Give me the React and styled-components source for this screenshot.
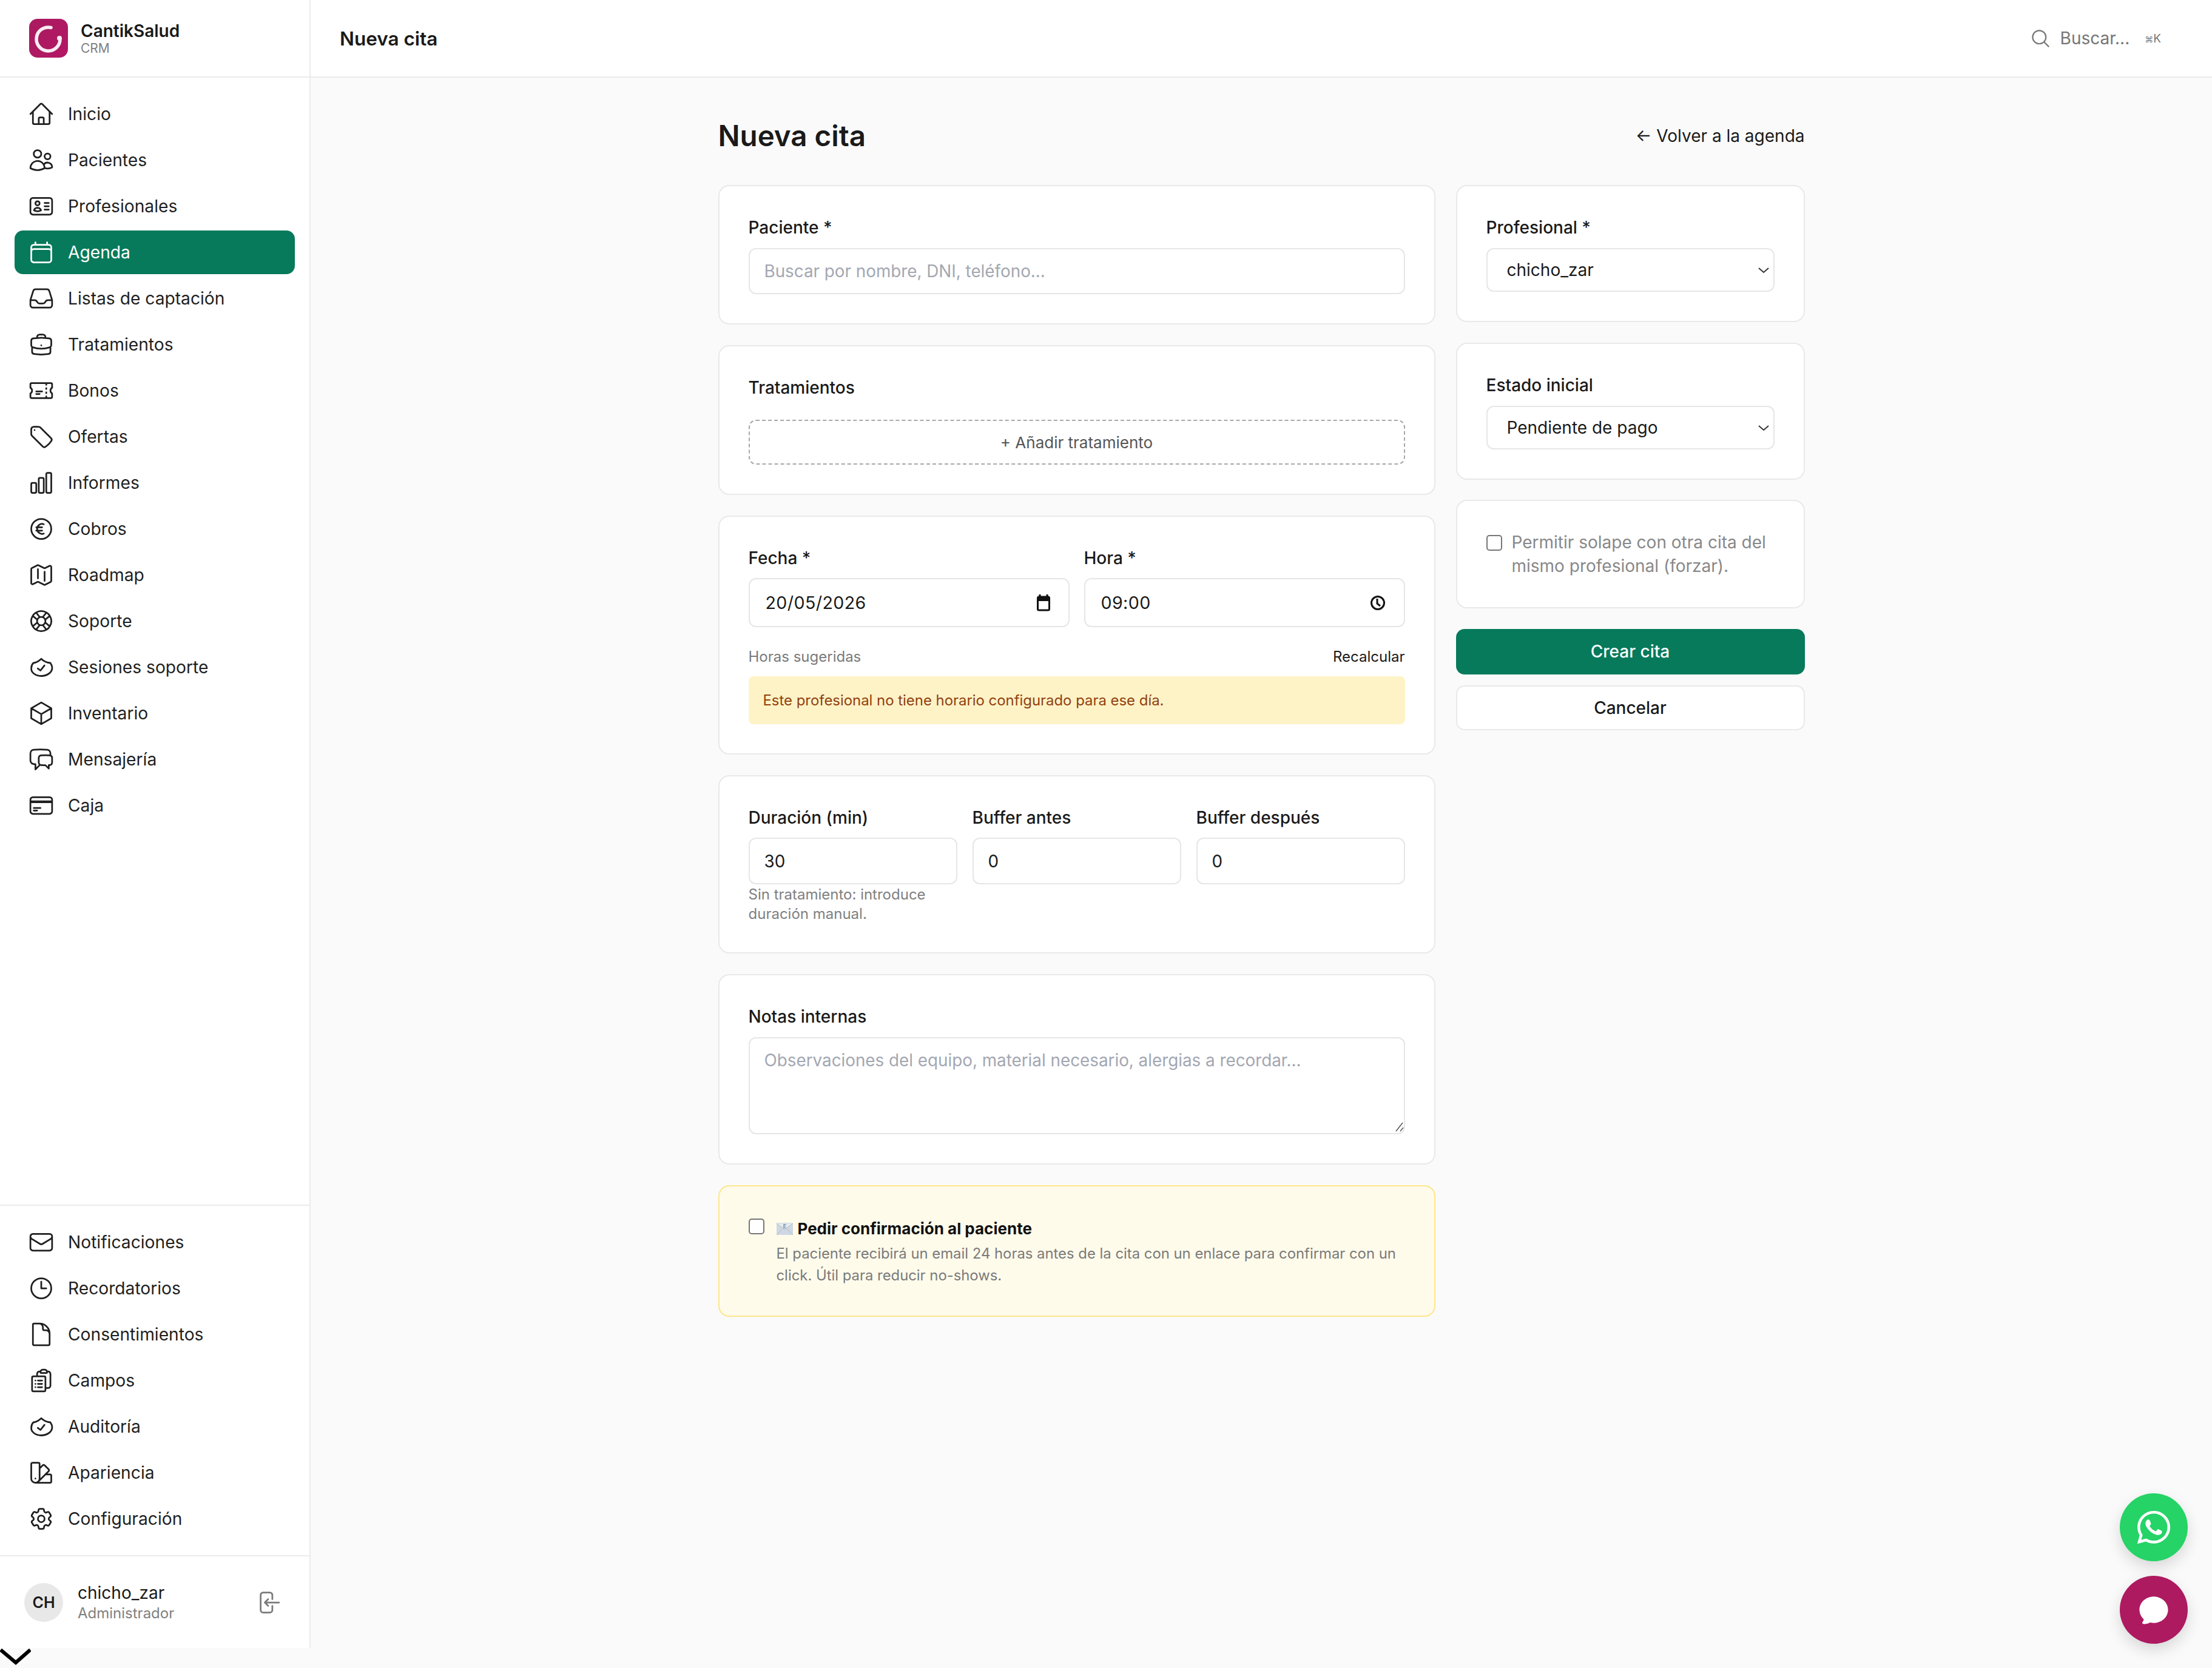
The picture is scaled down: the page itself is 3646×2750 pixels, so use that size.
import React from 'react';
import styled, { createGlobalStyle } from 'styled-components';
import { FaWhatsapp } from 'react-icons/fa';
import {
  HiOutlineHome,
  HiOutlineUsers,
  HiOutlineIdentification,
  HiOutlineCalendar,
  HiOutlineInbox,
  HiOutlineBriefcase,
  HiOutlineTicket,
  HiOutlineTag,
  HiOutlineChartBar,
  HiOutlineCurrencyEuro,
  HiOutlineMap,
  HiOutlineLifebuoy,
  HiOutlineCube,
  HiOutlineChatBubbleLeftRight,
  HiOutlineCreditCard,
  HiOutlineEnvelope,
  HiOutlineClock,
  HiOutlineDocument,
  HiOutlineClipboardDocumentList,
  HiOutlineSwatch,
  HiOutlineCog6Tooth,
  HiOutlineArrowLeftOnRectangle,
  HiOutlineMagnifyingGlass,
  HiChatBubbleOvalLeft,
} from 'react-icons/hi2';

const GlobalStyle = createGlobalStyle`
  * { box-sizing: border-box; }
  html, body { margin: 0; padding: 0; background: #fafafa; }
  body {
    font-family: Inter, "Liberation Sans", sans-serif;
    color: #1a1a1a;
    font-size: 28px;
  }
`;

const Shell = styled.div`
  width: 3646px;
  height: 2750px;
  overflow: hidden;
  position: relative;
`;

const Row = styled.div`
  display: flex;
  height: 2717px;
`;

const Sidebar = styled.aside`
  width: 512px;
  flex: none;
  display: flex;
  flex-direction: column;
  background: #fff;
  border-right: 2px solid #ebebeb;
`;

const Brand = styled.div`
  height: 128px;
  flex: none;
  display: flex;
  align-items: center;
  gap: 21px;
  padding-left: 48px;
  border-bottom: 2px solid #ebebeb;
`;

const BrandName = styled.div`
  font-size: 28px;
  font-weight: 600;
  line-height: 34px;
`;

const BrandSub = styled.div`
  font-size: 21px;
  line-height: 24px;
  color: #808080;
`;

const Nav = styled.nav`
  display: flex;
  flex-direction: column;
  gap: 4px;
  padding: 24px;
  flex: ${(p) => (p.$grow ? 1 : 'none')};
  border-bottom: ${(p) => (p.$grow ? 'none' : '2px solid #ebebeb')};
  border-top: ${(p) => (p.$grow ? 'none' : '2px solid #ebebeb')};
`;

const NavItem = styled.a`
  height: 72px;
  display: flex;
  align-items: center;
  gap: 22px;
  padding-left: 22px;
  border-radius: 14px;
  font-size: 28.2px;
  background: ${(p) => (p.$active ? '#067a5b' : 'transparent')};
  color: ${(p) => (p.$active ? '#fff' : '#1f1f1f')};
  svg { flex: none; }
`;

const UserRow = styled.div`
  height: 151px;
  flex: none;
  display: flex;
  align-items: center;
  gap: 24px;
  padding: 0 46px 0 40px;
`;

const Avatar = styled.div`
  width: 64px;
  height: 64px;
  border-radius: 50%;
  background: #e8e8e8;
  display: flex;
  align-items: center;
  justify-content: center;
  font-size: 25px;
  font-weight: 600;
`;

const UserInfo = styled.div`
  flex: 1;
`;

const UserName = styled.div`
  font-size: 28px;
  line-height: 36px;
`;

const UserRole = styled.div`
  font-size: 24px;
  line-height: 32px;
  color: #808080;
`;

const Main = styled.main`
  flex: 1;
  display: flex;
  flex-direction: column;
`;

const TopBar = styled.header`
  height: 128px;
  flex: none;
  background: #fff;
  border-bottom: 2px solid #ebebeb;
  display: flex;
  align-items: center;
  justify-content: space-between;
  padding: 0 84px 0 48px;
`;

const TopTitle = styled.div`
  font-size: 31.5px;
  font-weight: 600;
`;

const Search = styled.div`
  display: flex;
  align-items: center;
  color: #767676;
  font-size: 28px;
  gap: 15px;
`;

const Kbd = styled.span`
  font-size: 19px;
  margin-left: 10px;
`;

const KbdMark = styled.span`
  font-size: 14px;
`;

const Content = styled.div`
  width: 1791px;
  margin: 0 auto;
  padding-top: 59px;
`;

const TitleRow = styled.div`
  height: 72px;
  margin-bottom: 46px;
  display: flex;
  align-items: center;
  justify-content: space-between;
`;

const PageTitle = styled.h1`
  margin: 0;
  font-size: 47.5px;
  font-weight: 600;
`;

const BackLink = styled.a`
  font-size: 28px;
  display: flex;
  align-items: center;
  gap: 8px;
  padding-top: 2px;
`;

const Columns = styled.div`
  display: grid;
  grid-template-columns: 1182px 575px;
  gap: 34px;
  align-items: start;
`;

const Stack = styled.div`
  display: flex;
  flex-direction: column;
  gap: ${(p) => p.$gap}px;
`;

const Card = styled.section`
  background: ${(p) => (p.$warm ? '#fffbeb' : '#fff')};
  border: 2px solid ${(p) => (p.$warm ? '#fde68a' : '#e9e9e9')};
  border-radius: 18px;
  padding: 48px;
`;

const Label = styled.label`
  display: block;
  font-size: 28px;
  font-weight: 500;
  line-height: 40px;
  margin-bottom: ${(p) => p.$gap || 14}px;
`;

const Field = styled.div`
  display: flex;
  align-items: center;
  height: ${(p) => p.$height || 76}px;
  padding: 0 30px 0 ${(p) => p.$pad || 24}px;
  background: #fff;
  border: 2px solid #e6e6e6;
  border-radius: 12px;
  svg { flex: none; }
`;

const FieldInput = styled.input`
  flex: 1;
  min-width: 0;
  width: 100%;
  border: 0;
  outline: 0;
  padding: 0;
  background: transparent;
  font: inherit;
  font-size: ${(p) => p.$size || 27.8}px;
  letter-spacing: ${(p) => (p.$size ? '0.4px' : '0')};
  color: #1a1a1a;
  &::placeholder { color: #a3a7b1; opacity: 1; }
`;

const DashedButton = styled.button`
  display: block;
  width: 100%;
  height: 74px;
  background: #fff;
  border: 2px dashed #a8a8a8;
  border-radius: 12px;
  font: inherit;
  font-size: 26px;
  color: #555;
`;

const TwoCols = styled.div`
  display: grid;
  grid-template-columns: 1fr 1fr;
  gap: 24px;
`;

const ThreeCols = styled.div`
  display: grid;
  grid-template-columns: repeat(3, 1fr);
  gap: 25px;
`;

const HoursRow = styled.div`
  display: flex;
  justify-content: space-between;
  line-height: 32px;
  font-size: 24px;
  color: #7a7a7a;
  margin: 33px 0 16px;
`;

const LinkText = styled.span`
  color: #1a1a1a;
`;

const Alert = styled.div`
  height: 79px;
  display: flex;
  align-items: center;
  padding: 0 24px;
  background: #fef3c7;
  border-radius: 8px;
  font-size: 23.9px;
  color: #92400e;
`;

const Hint = styled.div`
  font-size: 24px;
  line-height: 32px;
  color: #808080;
  margin: 1px 0 -1px;
`;

const AreaWrap = styled.div`
  position: relative;
  height: 160px;
`;

const TextArea = styled.textarea`
  display: block;
  width: 100%;
  height: 100%;
  padding: 18px 24px;
  border: 2px solid #e6e6e6;
  border-radius: 12px;
  outline: 0;
  resize: none;
  font: inherit;
  font-size: 27.8px;
  line-height: 36px;
  &::placeholder { color: #a3a7b1; opacity: 1; }
`;

const Grip = styled.svg`
  position: absolute;
  right: 2px;
  bottom: 4px;
`;

const CheckRow = styled.div`
  display: flex;
  align-items: flex-start;
  gap: ${(p) => p.$gap}px;
`;

const CheckBox = styled.input.attrs({ type: 'checkbox' })`
  appearance: none;
  flex: none;
  width: 26px;
  height: 26px;
  margin: ${(p) => p.$top}px 0 0;
  background: #fff;
  border: 2.5px solid #767676;
  border-radius: 5px;
`;

const ConfirmTitle = styled.div`
  display: flex;
  align-items: center;
  gap: 8px;
  font-size: 26px;
  font-weight: 700;
  line-height: 40px;
  color: #111;
  margin-top: 2px;
`;

const ConfirmText = styled.div`
  font-size: 23.85px;
  line-height: 36px;
  color: #7a7a7a;
  margin-top: 3px;
`;

const OverlapText = styled.div`
  font-size: 28px;
  line-height: 39px;
  color: #888;
  margin-top: 1px;
`;

const SelectWrap = styled.div`
  position: relative;
  height: 72px;
`;

const Select = styled.select`
  appearance: none;
  display: block;
  width: 100%;
  height: 100%;
  padding: 0 40px 0 32px;
  background: #fff;
  border: 2px solid #e6e6e6;
  border-radius: 12px;
  outline: 0;
  font: inherit;
  font-size: 28px;
  color: #1a1a1a;
`;

const SelectArrow = styled.svg`
  position: absolute;
  right: 8px;
  top: 31px;
  pointer-events: none;
`;

const Actions = styled.div`
  display: flex;
  flex-direction: column;
  gap: 18px;
`;

const Button = styled.button`
  height: ${(p) => (p.$primary ? 75 : 74)}px;
  border-radius: 14px;
  border: ${(p) => (p.$primary ? 'none' : '2px solid #e9e9e9')};
  background: ${(p) => (p.$primary ? '#067a5b' : '#fff')};
  color: ${(p) => (p.$primary ? '#fff' : '#1a1a1a')};
  font: inherit;
  font-size: 28px;
  font-weight: 500;
`;

const BottomStrip = styled.div`
  height: 33px;
  display: flex;
  align-items: flex-start;
`;

const Fabs = styled.div`
  position: absolute;
  right: 40px;
  bottom: 40px;
  display: flex;
  flex-direction: column;
  gap: 24px;
`;

const Fab = styled.div`
  width: 112px;
  height: 112px;
  border-radius: 50%;
  display: flex;
  align-items: center;
  justify-content: center;
  background: ${(p) => p.$color};
  color: #fff;
  box-shadow: 0 10px 24px rgba(0, 0, 0, 0.14);
`;

const Logo = () => (
  <svg width="64" height="64" viewBox="0 0 64 64">
    <defs>
      <linearGradient id="logoBg" x1="0" y1="0" x2="1" y2="1">
        <stop offset="0" stopColor="#a91b60" />
        <stop offset="1" stopColor="#b31764" />
      </linearGradient>
    </defs>
    <rect width="64" height="64" rx="14" fill="url(#logoBg)" />
    <path
      d="M36 14.5 A19.5 19.5 0 1 0 51 33"
      fill="none"
      stroke="#f7edf2"
      strokeWidth="5.5"
      strokeLinecap="round"
    />
    <circle cx="50" cy="32" r="4" fill="#f7edf2" />
  </svg>
);

// rounder than the heroicons shield, wider than it is tall
const ShieldGlyph = ({ size }) => (
  <svg width={size} height={size} viewBox="0 0 44 44" fill="none" stroke="currentColor" strokeWidth="2.8" strokeLinecap="round" strokeLinejoin="round">
    <path d="M22 8.2C26 12 32 14.5 37 15C39 18 40 20 40 23C40 31 31 36.5 22 36.5C13 36.5 4.5 31 5.7 23C5.7 20 7 17 9 15C14 14.5 18 12 22 8.2Z" />
    <path d="M16.3 24.2L20.7 27.5L27.3 19.2" />
  </svg>
);

const CalendarGlyph = () => (
  <svg width="22" height="28" viewBox="0 0 22 28">
    <path d="M5 0v4M17 0v4" stroke="#111" strokeWidth="3" />
    <rect x="1.5" y="4" width="19" height="22" fill="none" stroke="#111" strokeWidth="3" rx="2" />
    <rect x="1.5" y="4" width="19" height="7" fill="#111" />
  </svg>
);

const ClockGlyph = () => (
  <svg width="26" height="26" viewBox="0 0 26 26" fill="none" stroke="#111" strokeWidth="3">
    <circle cx="13" cy="13" r="10.5" />
    <path d="M12 6v8l5 4" />
  </svg>
);

const MailEmoji = () => (
  <svg width="27" height="20" viewBox="0 0 27 20">
    <rect width="27" height="20" rx="1.5" fill="#cfd8e2" />
    <path d="M0 1l13.5 10L27 1" fill="#e6ebf1" stroke="#aeb9c6" strokeWidth="1" />
    <path d="M0 20l10-10M27 20L17 10" stroke="#aeb9c6" strokeWidth="1" />
    <text x="13.5" y="9" fontSize="9" textAnchor="middle" fill="#7f8b99" fontFamily="Inter, sans-serif">E</text>
  </svg>
);

const Arrow = () => (
  <SelectArrow width="20" height="12" viewBox="0 0 20 12" fill="none" stroke="#333" strokeWidth="2">
    <path d="M2 2l8 7 8-7" />
  </SelectArrow>
);

const mainNav = [
  ['Inicio', HiOutlineHome],
  ['Pacientes', HiOutlineUsers],
  ['Profesionales', HiOutlineIdentification],
  ['Agenda', HiOutlineCalendar, true],
  ['Listas de captación', HiOutlineInbox],
  ['Tratamientos', HiOutlineBriefcase],
  ['Bonos', HiOutlineTicket],
  ['Ofertas', HiOutlineTag],
  ['Informes', HiOutlineChartBar],
  ['Cobros', HiOutlineCurrencyEuro],
  ['Roadmap', HiOutlineMap],
  ['Soporte', HiOutlineLifebuoy],
  ['Sesiones soporte', ShieldGlyph],
  ['Inventario', HiOutlineCube],
  ['Mensajería', HiOutlineChatBubbleLeftRight],
  ['Caja', HiOutlineCreditCard],
];

const adminNav = [
  ['Notificaciones', HiOutlineEnvelope],
  ['Recordatorios', HiOutlineClock],
  ['Consentimientos', HiOutlineDocument],
  ['Campos', HiOutlineClipboardDocumentList],
  ['Auditoría', ShieldGlyph],
  ['Apariencia', HiOutlineSwatch],
  ['Configuración', HiOutlineCog6Tooth],
];

function NavList({ items, grow }) {
  return (
    <Nav $grow={grow}>
      {items.map(([label, Icon, active]) => (
        <NavItem key={label} $active={active}>
          <Icon size={44} />
          {label}
        </NavItem>
      ))}
    </Nav>
  );
}

export default function App() {
  return (
    <Shell>
      <GlobalStyle />
      <Row>
        <Sidebar>
          <Brand>
            <Logo />
            <div>
              <BrandName>CantikSalud</BrandName>
              <BrandSub>CRM</BrandSub>
            </div>
          </Brand>
          <NavList items={mainNav} grow />
          <NavList items={adminNav} />
          <UserRow>
            <Avatar>CH</Avatar>
            <UserInfo>
              <UserName>chicho_zar</UserName>
              <UserRole>Administrador</UserRole>
            </UserInfo>
            <HiOutlineArrowLeftOnRectangle size={44} color="#7a7a7a" />
          </UserRow>
        </Sidebar>
        <Main>
          <TopBar>
            <TopTitle>Nueva cita</TopTitle>
            <Search>
              <HiOutlineMagnifyingGlass size={35} />
              Buscar...
              <Kbd><KbdMark>⌘</KbdMark>K</Kbd>
            </Search>
          </TopBar>
          <Content>
            <TitleRow>
              <PageTitle>Nueva cita</PageTitle>
              <BackLink>← Volver a la agenda</BackLink>
            </TitleRow>
            <Columns>
              <Stack $gap={34}>
                <Card>
                  <Label>Paciente *</Label>
                  <Field>
                    <FieldInput placeholder="Buscar por nombre, DNI, teléfono..." />
                  </Field>
                </Card>
                <Card>
                  <Label $gap={33}>Tratamientos</Label>
                  <DashedButton>+ Añadir tratamiento</DashedButton>
                </Card>
                <Card>
                  <TwoCols>
                    <div>
                      <Label $gap={13}>Fecha *</Label>
                      <Field $height={81} $pad={26}>
                        <FieldInput $size={28.6} defaultValue="20/05/2026" />
                        <CalendarGlyph />
                      </Field>
                    </div>
                    <div>
                      <Label $gap={13}>Hora *</Label>
                      <Field $height={81} $pad={26}>
                        <FieldInput $size={28.6} defaultValue="09:00" />
                        <ClockGlyph />
                      </Field>
                    </div>
                  </TwoCols>
                  <HoursRow>
                    <span>Horas sugeridas</span>
                    <LinkText>Recalcular</LinkText>
                  </HoursRow>
                  <Alert>Este profesional no tiene horario configurado para ese día.</Alert>
                </Card>
                <Card>
                  <ThreeCols>
                    <div>
                      <Label $gap={13}>Duración (min)</Label>
                      <Field $height={77}>
                        <FieldInput defaultValue="30" />
                      </Field>
                      <Hint>Sin tratamiento: introduce duración manual.</Hint>
                    </div>
                    <div>
                      <Label $gap={13}>Buffer antes</Label>
                      <Field $height={77}>
                        <FieldInput defaultValue="0" />
                      </Field>
                    </div>
                    <div>
                      <Label $gap={13}>Buffer después</Label>
                      <Field $height={77}>
                        <FieldInput defaultValue="0" />
                      </Field>
                    </div>
                  </ThreeCols>
                </Card>
                <Card>
                  <Label>Notas internas</Label>
                  <AreaWrap>
                    <TextArea placeholder="Observaciones del equipo, material necesario, alergias a recordar..." />
                    <Grip width="14" height="16" viewBox="0 0 14 16" stroke="#555" strokeWidth="1.5">
                      <path d="M1 15L12 1M8 15l5-6" />
                    </Grip>
                  </AreaWrap>
                </Card>
                <Card $warm>
                  <CheckRow $gap={20}>
                    <CheckBox $top={5} />
                    <div>
                      <ConfirmTitle>
                        <MailEmoji />
                        Pedir confirmación al paciente
                      </ConfirmTitle>
                      <ConfirmText>
                        El paciente recibirá un email 24 horas antes de la cita con un enlace para confirmar con un click. Útil para reducir no-shows.
                      </ConfirmText>
                    </div>
                  </CheckRow>
                </Card>
              </Stack>
              <Stack $gap={33.5}>
                <Card>
                  <Label>Profesional *</Label>
                  <SelectWrap>
                    <Select defaultValue="chicho_zar">
                      <option>chicho_zar</option>
                    </Select>
                    <Arrow />
                  </SelectWrap>
                </Card>
                <Card>
                  <Label>Estado inicial</Label>
                  <SelectWrap>
                    <Select defaultValue="Pendiente de pago">
                      <option>Pendiente de pago</option>
                    </Select>
                    <Arrow />
                  </SelectWrap>
                </Card>
                <Card>
                  <CheckRow $gap={16}>
                    <CheckBox $top={8} />
                    <OverlapText>Permitir solape con otra cita del mismo profesional (forzar).</OverlapText>
                  </CheckRow>
                </Card>
                <Actions>
                  <Button $primary>Crear cita</Button>
                  <Button>Cancelar</Button>
                </Actions>
              </Stack>
            </Columns>
          </Content>
        </Main>
      </Row>
      <BottomStrip>
        <svg width="51" height="29" viewBox="0 0 51 29" fill="none" stroke="#000" strokeWidth="6">
          <path d="M1 3l25 21L50 3" />
        </svg>
      </BottomStrip>
      <Fabs>
        <Fab $color="#25d366">
          <FaWhatsapp size={62} />
        </Fab>
        <Fab $color="#ad1a60">
          <HiChatBubbleOvalLeft size={58} />
        </Fab>
      </Fabs>
    </Shell>
  );
}
